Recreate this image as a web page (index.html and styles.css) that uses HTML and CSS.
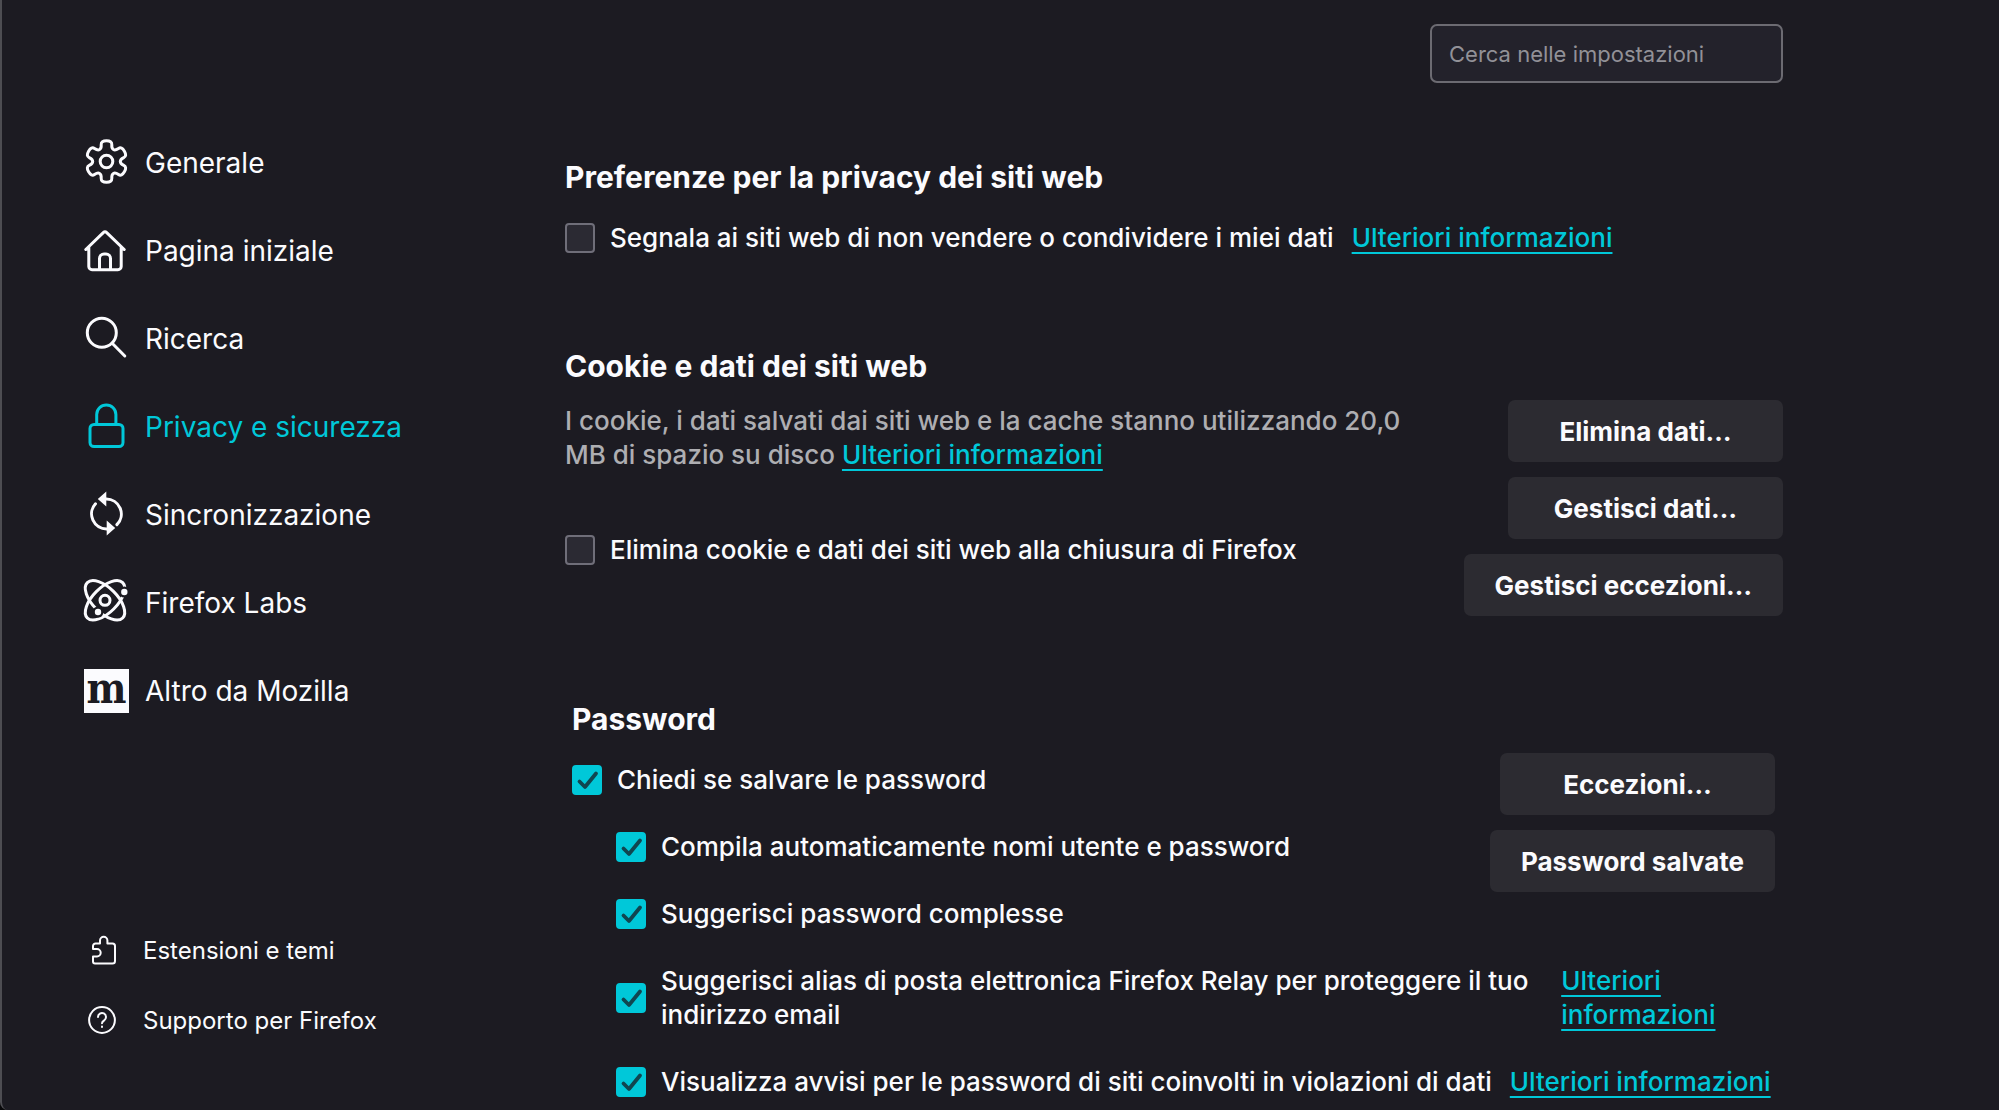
FILE: index.html
```html
<!DOCTYPE html>
<html lang="it">
<head>
<meta charset="utf-8">
<title>Impostazioni</title>
<link rel="stylesheet" href="styles.css">
</head>
<body>
<div class="page">
  <aside class="sidebar">
    <nav class="categories">
      <a class="category" href="#generale">
        <svg class="icon" viewBox="0 0 46 46"><g transform="translate(22.5 21.5)"><path d="M0-20.7Q5.5-20.7 5.3-16.9Q5-13.1 6.9-12Q8.8-10.9 12-13Q15.1-15.1 17.9-10.3Q20.7-5.5 17.3-3.9Q13.8-2.2 13.8 0Q13.8 2.2 17.3 3.9Q20.7 5.5 17.9 10.3Q15.1 15.1 12 13Q8.8 10.9 6.9 12Q5 13.1 5.3 16.9Q5.5 20.7 0 20.7Q-5.5 20.7-5.3 16.9Q-5 13.1-6.9 12Q-8.8 10.9-12 13Q-15.1 15.1-17.9 10.3Q-20.7 5.5-17.3 3.9Q-13.8 2.2-13.8 0Q-13.8-2.2-17.3-3.9Q-20.7-5.5-17.9-10.3Q-15.1-15.1-12-13Q-8.8-10.9-6.9-12Q-5-13.1-5.3-16.9Q-5.5-20.7 0-20.7Z"/><circle r="6.3"/></g></svg>
        <span>Generale</span>
      </a>
      <a class="category" href="#home">
        <svg class="icon" viewBox="0 0 46 46"><path d="M1.8 21.5L19.3 4.6Q21 3 22.7 4.6L40.2 21.5M4.8 19V38.5a3.2 3.2 0 0 0 3.2 3.2H34a3.2 3.2 0 0 0 3.2-3.2V19M15.5 41.5V30.5a4.5 4.5 0 0 1 4.5-4.5h2a4.5 4.5 0 0 1 4.5 4.5v11"/></svg>
        <span>Pagina iniziale</span>
      </a>
      <a class="category" href="#ricerca">
        <svg class="icon" viewBox="0 0 46 46"><circle cx="17.8" cy="16.8" r="14.5"/><path d="M28.2 27.2L40.8 40"/></svg>
        <span>Ricerca</span>
      </a>
      <a class="category selected" href="#privacy">
        <svg class="icon" viewBox="0 0 46 46"><path d="M12.7 20V10.5a9.6 9.6 0 0 1 19.2 0V20"/><rect x="6" y="20.5" width="33" height="22" rx="4"/></svg>
        <span>Privacy e sicurezza</span>
      </a>
      <a class="category" href="#sincronizzazione">
        <svg class="icon" viewBox="0 0 46 46"><path d="M11.5 11.8A15 15 0 0 0 23 36.9M22 7A15 15 0 0 1 32.9 32.6"/><path class="solid" d="M22.3-.5V14.5L13.8 7ZM22.7 28.5V43.5L31.2 36Z"/></svg>
        <span>Sincronizzazione</span>
      </a>
      <a class="category" href="#labs">
        <svg class="icon" viewBox="0 0 46 46"><ellipse cx="21" cy="20.3" rx="25" ry="12.3" transform="rotate(45 21 20.3)"/><ellipse cx="21" cy="20.3" rx="25" ry="12.3" transform="rotate(-45 21 20.3)"/><circle cx="21" cy="20.3" r="5"/><circle class="gap" cx="40.3" cy="12" r="5.5"/><circle class="gap" cx="14" cy="32" r="5.5"/><circle class="solid" cx="40.3" cy="12" r="3.2"/><circle class="solid" cx="14" cy="32" r="3.2"/></svg>
        <span>Firefox Labs</span>
      </a>
      <a class="category" href="#mozilla">
        <span class="mozilla" aria-hidden="true">m</span>
        <span>Altro da Mozilla</span>
      </a>
    </nav>
    <nav class="support">
      <a class="support-link" href="#estensioni">
        <svg class="icon" viewBox="0 0 30 30"><path d="M5 13.1V10A2.5 2.5 0 0 1 7.5 7.5H12V4.5a3.7 3.7 0 0 1 7.4 0V7.5H24.5A2.5 2.5 0 0 1 27 10V25a2.5 2.5 0 0 1-2.5 2.5H7A2 2 0 0 1 5 25.5V20.5H9a3.7 3.7 0 0 0 0-7.4Z"/></svg>
        <span>Estensioni e temi</span>
      </a>
      <a class="support-link" href="#supporto">
        <svg class="icon" viewBox="0 0 30 30"><circle cx="14" cy="14" r="12.9"/><path d="M10 11a4 4 0 1 1 6.2 3.3C14.7 15.3 14 15.9 14 17.3M14 20.5v.5"/></svg>
        <span>Supporto per Firefox</span>
      </a>
    </nav>
  </aside>

  <main class="content">
    <div class="search-bar">
      <input class="search" type="text" placeholder="Cerca nelle impostazioni" aria-label="Cerca nelle impostazioni">
    </div>

    <section class="group">
      <h2>Preferenze per la privacy dei siti web</h2>
      <div class="options">
        <div class="option">
          <label><input type="checkbox"><span>Segnala ai siti web di non vendere o condividere i miei dati</span></label>
          <a class="link" href="#info-privacy">Ulteriori informazioni</a>
        </div>
      </div>
    </section>

    <section class="group cookies">
      <h2>Cookie e dati dei siti web</h2>
      <div class="columns">
        <div class="cookie-info">
          <p>I cookie, i dati salvati dai siti web e la cache stanno utilizzando 20,0 MB di spazio su disco <a class="link" href="#info-cookie">Ulteriori informazioni</a></p>
          <div class="option">
            <label><input type="checkbox"><span>Elimina cookie e dati dei siti web alla chiusura di Firefox</span></label>
          </div>
        </div>
        <div class="buttons">
          <button type="button">Elimina dati…</button>
          <button type="button">Gestisci dati…</button>
          <button type="button">Gestisci eccezioni…</button>
        </div>
      </div>
    </section>

    <section class="group inset">
      <h2>Password</h2>
      <div class="columns">
        <div class="options">
          <div class="option">
            <label><input type="checkbox" checked><span>Chiedi se salvare le password</span></label>
          </div>
          <div class="option nested">
            <label><input type="checkbox" checked><span>Compila automaticamente nomi utente e password</span></label>
          </div>
          <div class="option nested">
            <label><input type="checkbox" checked><span>Suggerisci password complesse</span></label>
          </div>
        </div>
        <div class="buttons">
          <button type="button">Eccezioni…</button>
          <button type="button">Password salvate</button>
        </div>
      </div>
      <div class="more-options">
        <div class="option nested relay">
          <label><input type="checkbox" checked><span>Suggerisci alias di posta elettronica Firefox Relay per proteggere il tuo indirizzo email</span></label>
          <a class="link" href="#info-relay">Ulteriori informazioni</a>
        </div>
        <div class="option nested">
          <label><input type="checkbox" checked><span>Visualizza avvisi per le password di siti coinvolti in violazioni di dati</span></label>
          <a class="link" href="#info-violazioni">Ulteriori informazioni</a>
        </div>
      </div>
    </section>
  </main>
</div>
</body>
</html>
```

FILE: styles.css
```css
:root {
  --bg: #1c1b22;
  --text: #fbfbfe;
  --muted: #aeaeb2;
  --accent: #00c8d9;
  --button: #2c2b31;
}

* {
  box-sizing: border-box;
}

html {
  background: #08080a;
}

body {
  margin: 0;
  color: var(--text);
  font-family: Inter, "Liberation Sans", sans-serif;
  font-size: 26px;
  font-weight: 500;
  line-height: 34px;
}

.page {
  display: flex;
  min-height: 100vh;
  background: var(--bg);
  border-left: 2px solid #4d4d52;
  border-bottom-left-radius: 8px;
}

.sidebar {
  display: flex;
  flex-direction: column;
  justify-content: space-between;
  flex: 0 0 563px;
  padding: 119px 0 54px 82px;
}

.categories,
.support {
  display: flex;
  flex-direction: column;
  align-items: flex-start;
}

.category,
.support-link {
  display: flex;
  align-items: center;
  color: var(--text);
  font-weight: 400;
  text-decoration: none;
}

.category {
  gap: 15px;
  height: 88px;
  font-size: 28px;
}

.category.selected {
  color: var(--accent);
}

.support {
  padding-left: 4px;
}

.support-link {
  gap: 25px;
  height: 70px;
  font-size: 24px;
}

.icon {
  width: 46px;
  height: 46px;
  overflow: visible;
  fill: none;
  stroke: currentColor;
  stroke-width: 3;
  stroke-linecap: round;
  stroke-linejoin: round;
}

.icon .solid {
  fill: currentColor;
  stroke: none;
}

.icon .gap {
  fill: var(--bg);
  stroke: none;
}

.support-link .icon {
  width: 30px;
  height: 30px;
  stroke-width: 2;
}

.mozilla {
  width: 45px;
  height: 44px;
  margin-right: 1px;
  background: var(--text);
  color: var(--bg);
  font: bold 42px/40px "DejaVu Serif Condensed", "DejaVu Serif", serif;
  text-align: center;
}

.content {
  flex: 0 1 1218px;
  min-width: 0;
  padding-top: 24px;
}

.search-bar {
  display: flex;
  justify-content: flex-end;
  margin-bottom: 74px;
}

.search {
  width: 353px;
  height: 59px;
  padding: 0 17px;
  border: 2px solid #6c6b72;
  border-radius: 7px;
  background: #23222b;
  color: var(--text);
  font: inherit;
  font-size: 22px;
  font-weight: 400;
}

.search::placeholder {
  color: #929197;
  opacity: 1;
}

.group {
  margin-bottom: 91px;
}

.group.cookies {
  margin-bottom: 83px;
}

.group.inset {
  margin-bottom: 0;
  padding: 0 8px 11px 7px;
}

.columns {
  display: flex;
  justify-content: space-between;
  gap: 36px;
}

h2 {
  margin: 0 0 14px;
  font-size: 30px;
  font-weight: 700;
  line-height: 40px;
}

p {
  margin: 0 0 61px;
  color: var(--muted);
}

.cookie-info {
  padding-top: 4px;
}

.options,
.more-options {
  display: flex;
  flex-direction: column;
  gap: 33px;
}

.options {
  padding-top: 10px;
}

.more-options {
  padding-top: 33px;
}

.option {
  display: flex;
  align-items: center;
  gap: 18px;
}

.option.nested {
  padding-left: 44px;
}

.option label {
  display: flex;
  align-items: center;
  gap: 15px;
}

.relay label {
  flex: 0 0 80%;
}

input[type="checkbox"] {
  appearance: none;
  flex: none;
  width: 30px;
  height: 30px;
  margin: 0;
  border: 2px solid #6f6e79;
  border-radius: 4px;
  background: #2b2a33;
}

input[type="checkbox"]:checked {
  border-color: var(--accent);
  background: var(--accent) url("data:image/svg+xml,%3Csvg xmlns='http://www.w3.org/2000/svg' viewBox='0 0 30 30'%3E%3Cpath d='M7.5 16.5L13 22L24 8.5' fill='none' stroke='%23104650' stroke-width='3.8' stroke-linecap='round' stroke-linejoin='round'/%3E%3C/svg%3E") center / 30px 30px no-repeat;
}

.link {
  color: var(--accent);
  text-decoration: underline 2px;
  text-underline-offset: 5px;
  text-decoration-skip-ink: none;
}

.buttons {
  display: flex;
  flex: none;
  flex-direction: column;
  align-items: flex-end;
  gap: 15px;
}

button {
  min-width: 275px;
  height: 62px;
  padding: 2px 31px 0;
  border: 0;
  border-radius: 7px;
  background: var(--button);
  color: var(--text);
  font: inherit;
  font-weight: 700;
}
```
